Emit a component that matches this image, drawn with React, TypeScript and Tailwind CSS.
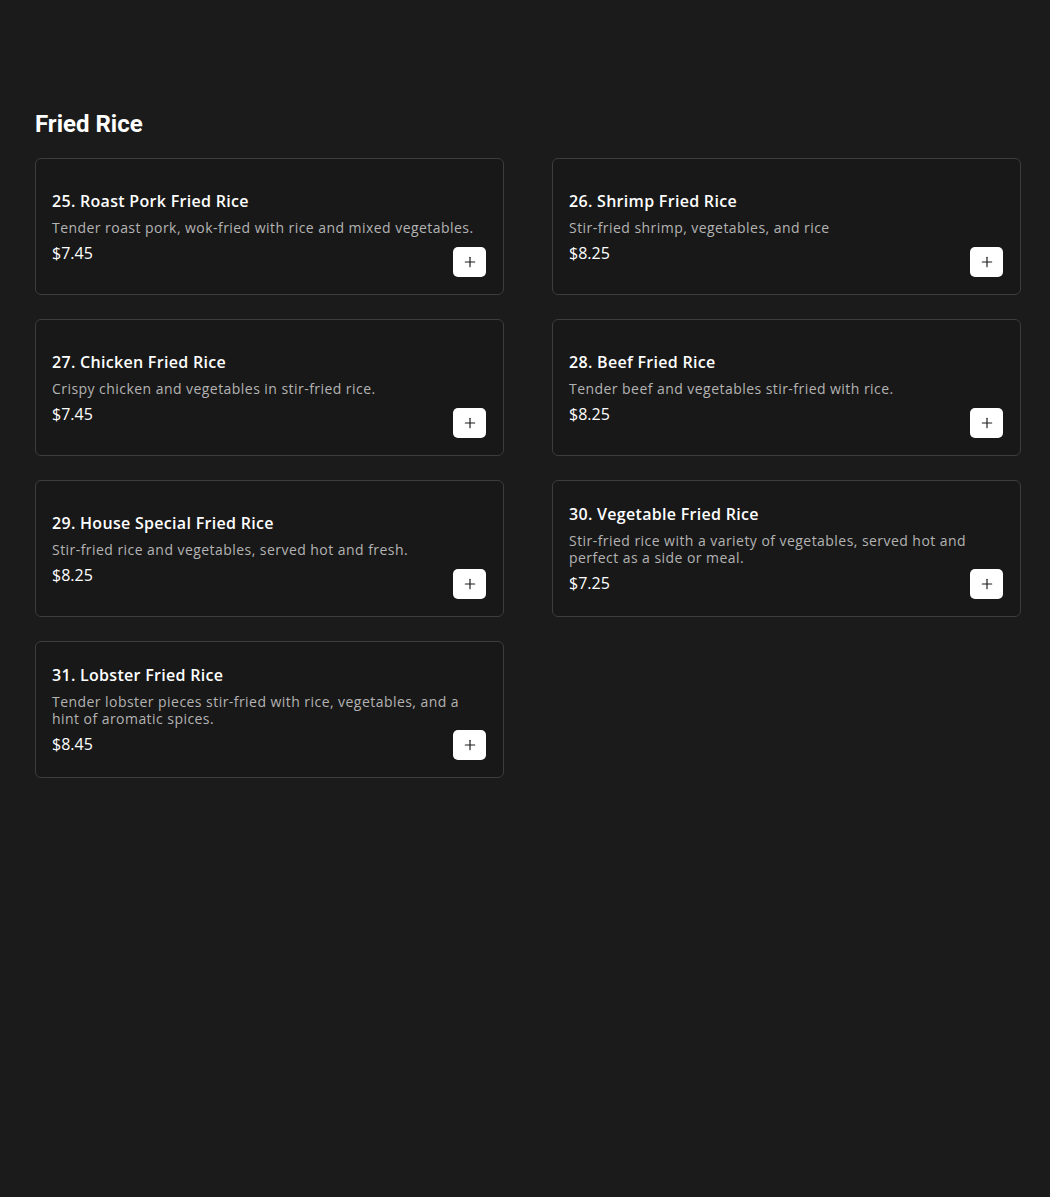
import { Plus } from "lucide-react";

const items = [
  { title: "25. Roast Pork Fried Rice", desc: "Tender roast pork, wok-fried with rice and mixed vegetables.", price: "$7.45" },
  { title: "26. Shrimp Fried Rice", desc: "Stir-fried shrimp, vegetables, and rice", price: "$8.25" },
  { title: "27. Chicken Fried Rice", desc: "Crispy chicken and vegetables in stir-fried rice.", price: "$7.45" },
  { title: "28. Beef Fried Rice", desc: "Tender beef and vegetables stir-fried with rice.", price: "$8.25" },
  { title: "29. House Special Fried Rice", desc: "Stir-fried rice and vegetables, served hot and fresh.", price: "$8.25" },
  { title: "30. Vegetable Fried Rice", desc: "Stir-fried rice with a variety of vegetables, served hot and perfect as a side or meal.", price: "$7.25" },
  { title: "31. Lobster Fried Rice", desc: "Tender lobster pieces stir-fried with rice, vegetables, and a hint of aromatic spices.", price: "$8.45" },
];

export default function App() {
  return (
    <div className="min-h-[1197px] bg-[#1b1b1b] pt-[108px] pl-[35px] pr-[29px] font-['Open_Sans',sans-serif]">
      <h2 className="text-2xl font-bold leading-8 text-white font-['Roboto',sans-serif] mb-[18px]">
        Fried Rice
      </h2>
      <div className="grid grid-cols-2 gap-x-12 gap-y-6">
        {items.map((item) => (
          <div
            key={item.title}
            className="relative flex h-[137px] items-center rounded-md border border-[#3d3d3d] bg-[#181818] p-4"
          >
            <div className="flex flex-col">
              <h3 className="text-base font-semibold leading-6 tracking-[0.3px] text-white mb-[6px]">{item.title}</h3>
              <p className="text-sm leading-[17px] tracking-[0.45px] text-[#b3b3b3] mb-[5px]">{item.desc}</p>
              <span className="text-base leading-6 text-white">{item.price}</span>
            </div>
            <button className="absolute bottom-[17px] right-[17px] flex items-center justify-center w-[33px] h-[30px] rounded-[5px] bg-white text-[#1b1b1b]">
              <Plus size={16} strokeWidth={1.75} />
            </button>
          </div>
        ))}
      </div>
    </div>
  );
}
